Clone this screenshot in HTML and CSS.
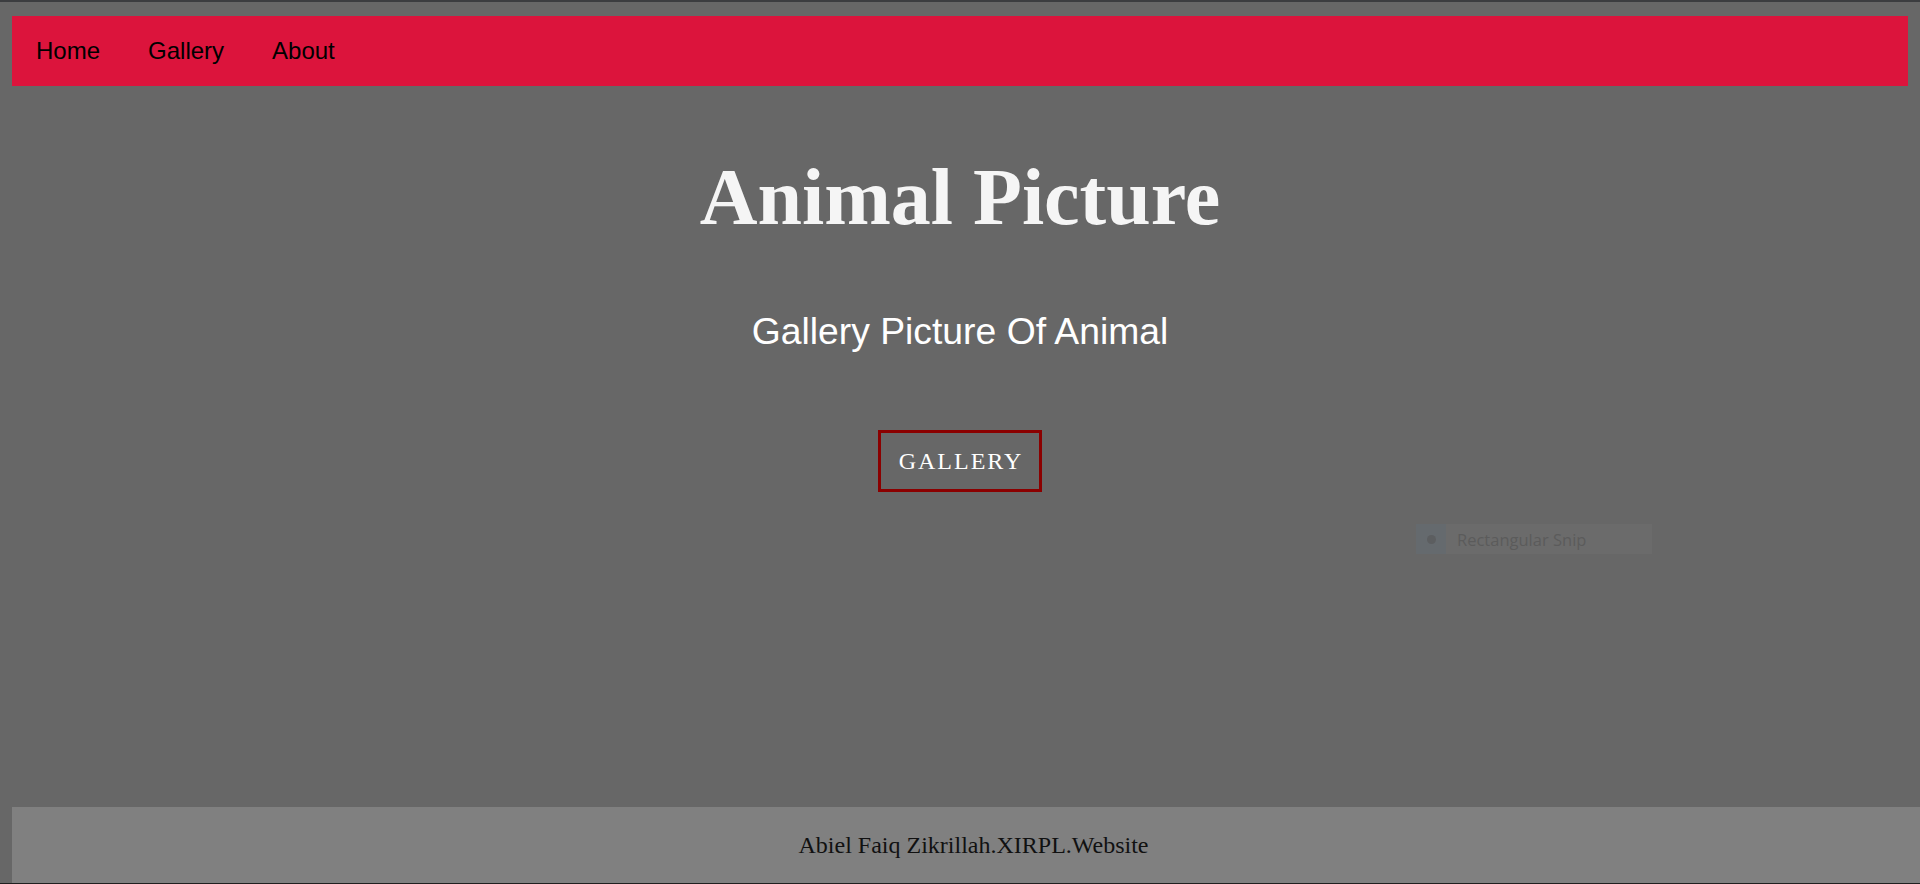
FILE: index.html
```html
<!DOCTYPE html>
<html lang="en">
<head>
<meta charset="utf-8">
<title>Animal Picture</title>
<link rel="stylesheet" href="styles.css">
</head>
<body>
<div class="page">
  <nav class="nav">
    <a class="nav-link" href="#">Home</a>
    <a class="nav-link" href="#">Gallery</a>
    <a class="nav-link" href="#">About</a>
  </nav>
  <main class="hero">
    <div class="hero-text">
      <h1 class="title">Animal Picture</h1>
      <p class="subtitle">Gallery Picture Of Animal</p>
    </div>
    <div class="hero-action">
      <a class="btn" href="#">GALLERY</a>
    </div>
  </main>
  <footer class="footer">
    <p class="footer-text">Abiel Faiq Zikrillah.XIRPL.Website</p>
  </footer>
  <div class="snip">
    <span class="snip-icon"><span class="snip-dot"></span></span>
    <span class="snip-label">Rectangular Snip</span>
  </div>
</div>
</body>
</html>
```

FILE: styles.css
```css
* { box-sizing: border-box; }
html, body { margin: 0; padding: 0; }
body { background: #676767; overflow: hidden; }

.page {
  position: relative;
  height: 884px;
  display: flex;
  flex-direction: column;
  border-top: 2px solid #3c3d40;
  border-bottom: 1px solid #1f1f1f;
}

.nav {
  margin: 14px 12px 0;
  height: 70px;
  background: #dc143c;
  display: flex;
  align-items: center;
}
.nav-link {
  font-family: "Liberation Sans", Arial, sans-serif;
  font-size: 24px;
  color: #000;
  text-decoration: none;
  padding: 0 24px;
}

.hero {
  flex: 1;
  display: flex;
  flex-direction: column;
  align-items: stretch;
}
.hero-text {
  text-align: center;
  color: #f5f5f5;
}
.title {
  margin: 71px 0 0;
  font-family: "Liberation Serif", "Times New Roman", serif;
  font-weight: bold;
  font-size: 80px;
  line-height: 1;
}
.subtitle {
  margin: 76px 0 0;
  font-family: "Liberation Sans", Arial, sans-serif;
  font-size: 37.3px;
  line-height: 1;
  color: #fff;
}
.hero-action {
  display: flex;
  justify-content: center;
  margin-top: 80px;
}
.btn {
  width: 164px;
  height: 62px;
  border: 3px solid #8b0000;
  display: flex;
  align-items: center;
  justify-content: center;
  font-family: "Liberation Serif", "Times New Roman", serif;
  font-size: 24px;
  letter-spacing: 2px;
  color: #fff;
  text-decoration: none;
  padding-left: 2px;
}

.footer {
  margin-left: 12px;
  height: 76px;
  background: #808080;
  display: flex;
  align-items: center;
  justify-content: center;
  padding-left: 15px;
}
.footer-text {
  margin: 0;
  font-family: "Liberation Serif", "Times New Roman", serif;
  font-size: 24px;
  color: #111;
}

.snip {
  position: absolute;
  left: 1416px;
  top: 522px;
  width: 236px;
  height: 30px;
  background: #6b6b6b;
  display: flex;
  align-items: center;
}
.snip-icon {
  width: 30px;
  height: 30px;
  background: #656a6e;
  display: flex;
  align-items: center;
  justify-content: center;
}
.snip-dot {
  width: 9px;
  height: 9px;
  border-radius: 50%;
  background: #5c5e60;
}
.snip-label {
  margin-left: 11px;
  font-family: "Open Sans", "Noto Sans", sans-serif;
  font-size: 16.5px;
  color: #5b5b5b;
}
```
